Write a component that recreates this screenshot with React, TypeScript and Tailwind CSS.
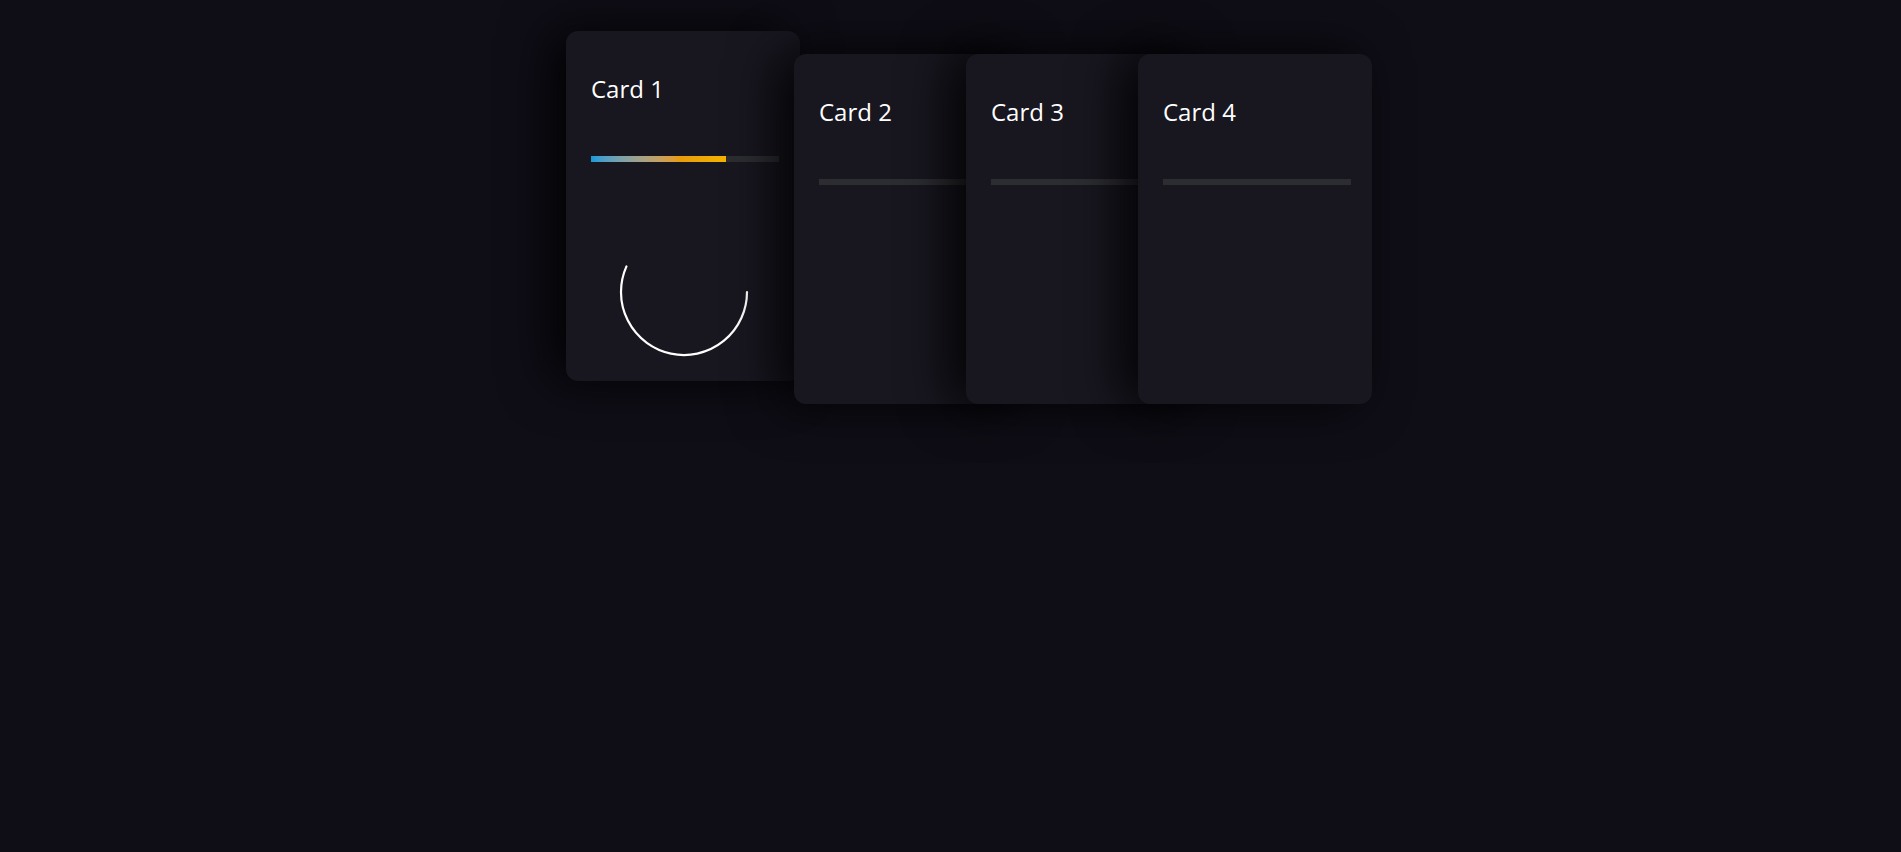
import { ReactNode } from 'react';

type CardProps = {
  title: string;
  progress?: number;
  spinner?: boolean;
  className?: string;
};

function Spinner() {
  return (
    <svg width="130" height="130" viewBox="0 0 130 130" fill="none">
      <path
        d="M128 65 A63 63 0 1 1 7.45 39.38"
        stroke="#ffffff"
        strokeWidth="2.2"
        strokeLinecap="round"
      />
    </svg>
  );
}

function Card({ title, progress, spinner, className }: CardProps) {
  let extra: ReactNode = null;
  if (spinner) {
    extra = (
      <div className="mt-[65px] flex justify-center pl-[2px]">
        <Spinner />
      </div>
    );
  }

  return (
    <div
      className={
        'relative flex h-[350px] w-[234px] shrink-0 flex-col rounded-xl bg-[#18161f] px-[25px] pt-[42px] shadow-[-15px_0_50px_rgba(0,0,0,0.9)] ' +
        (className ?? '')
      }
    >
      <h3 className="text-2xl font-normal leading-8 text-white">{title}</h3>

      <div className="mt-[51px] h-1.5 w-[188px] bg-[#2c2d31]">
        {progress !== undefined && (
          <div
            className="h-full bg-gradient-to-r from-[#0a9bd8] via-[#e69c0c] via-65% to-[#f6b300]"
            style={{ width: `${progress}%` }}
          />
        )}
      </div>

      {extra}
    </div>
  );
}

export default function App() {
  return (
    <div
      className="min-h-[852px] w-full bg-[#0f0e17]"
      style={{ fontFamily: '"Open Sans", "Noto Sans", sans-serif' }}
    >
      <div className="flex items-start pl-[566px]">
        <Card title="Card 1" progress={72} spinner className="z-10 mt-[31px]" />
        <Card title="Card 2" className="z-20 ml-[-6px] mt-[54px]" />
        <Card title="Card 3" className="z-30 ml-[-62px] mt-[54px]" />
        <Card title="Card 4" className="z-40 ml-[-62px] mt-[54px]" />
      </div>
    </div>
  );
}
